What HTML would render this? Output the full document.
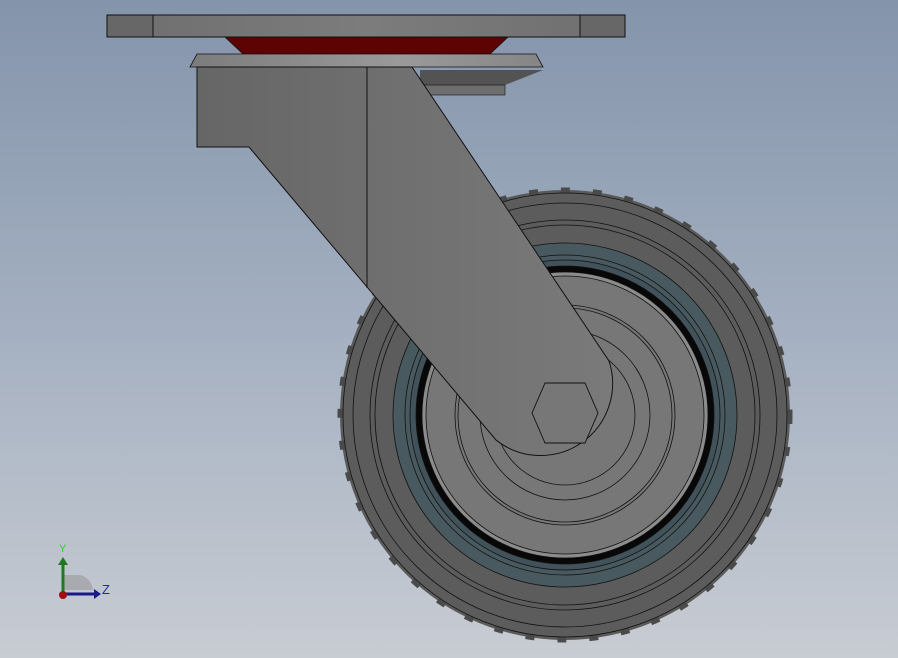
<!DOCTYPE html>
<html><head><meta charset="utf-8"><style>
html,body{margin:0;padding:0;width:898px;height:658px;overflow:hidden;}
body{background:linear-gradient(#8494ab 0%,#a4b0c1 50%,#c8ccd3 100%);}
svg{display:block}
</style></head><body>
<svg width="898" height="658" viewBox="0 0 898 658" xmlns="http://www.w3.org/2000/svg">
<defs>
<linearGradient id="pl" x1="0" x2="1"><stop offset="0" stop-color="#6e6e6e"/><stop offset="0.5" stop-color="#7c7c7c"/><stop offset="1" stop-color="#6f6f6f"/></linearGradient>
<linearGradient id="lp" x1="0" x2="1"><stop offset="0" stop-color="#7c7c7c"/><stop offset="0.6" stop-color="#9a9a9a"/><stop offset="1" stop-color="#858585"/></linearGradient>
<linearGradient id="br" x1="0" x2="1"><stop offset="0" stop-color="#666"/><stop offset="1" stop-color="#7a7a7a"/></linearGradient>
</defs>
<g stroke="#111" stroke-width="0.8">
<circle cx="565" cy="415" r="225" fill="#5a5a5a" stroke="none"/>
<circle cx="565" cy="415" r="225" fill="none" stroke="#4a4a4a" stroke-width="5" stroke-dasharray="9 23"/>
<circle cx="565" cy="415" r="222" fill="#5c5c5c"/>
<circle cx="565" cy="415" r="212" fill="none"/>
<circle cx="565" cy="415" r="195" fill="#5c5c5c"/>
<circle cx="565" cy="415" r="190" fill="none"/>
<circle cx="565" cy="415" r="172" fill="#48595f"/>
<circle cx="565" cy="415" r="160" fill="none"/>
<circle cx="565" cy="415" r="155" fill="#42525a"/>
<circle cx="565" cy="415" r="149" fill="#080808"/>
<circle cx="565" cy="415" r="143" fill="#8c8c8c"/>
<circle cx="565" cy="415" r="139" fill="#777"/>
<circle cx="565" cy="415" r="110" fill="none"/>
<circle cx="565" cy="415" r="107" fill="none"/>
<circle cx="565" cy="415" r="85" fill="none"/>
<circle cx="565" cy="415" r="70" fill="none"/>
</g>
<polygon points="225,37 508,37 490,54 243,54" fill="#5e0303" stroke="#111" stroke-width="0.8"/>
<rect x="107" y="15" width="518" height="22" fill="url(#pl)" stroke="#111" stroke-width="1"/>
<rect x="107" y="15" width="46" height="22" fill="#676767" stroke="#111" stroke-width="1"/>
<rect x="580" y="15" width="45" height="22" fill="#676767" stroke="#111" stroke-width="1"/>
<polygon points="420,70 543,70 505,85 420,85" fill="#535353"/>
<rect x="420" y="85" width="85" height="10" fill="#6e6e6e" stroke="#111" stroke-width="0.6"/>
<polygon points="197,54 536,54 543,67 190,67" fill="url(#lp)" stroke="#111" stroke-width="0.8"/>
<path d="M197,67 L412,67 L609,361 A72,72 0 0 1 496,440 L249,147 L197,147 Z" fill="url(#br)" stroke="#111" stroke-width="1"/>
<line x1="367" y1="67" x2="367" y2="288" stroke="#111" stroke-width="1"/>
<polygon points="545,383 585,383 598,413 585,443 545,443 532,413" fill="#777" stroke="#111" stroke-width="0.9"/>
<path d="M63,575 L80,575 A17,17 0 0 1 93,590 L63,590 Z" fill="#a8aab0"/>
<line x1="63" y1="594" x2="95" y2="594" stroke="#1a1a8a" stroke-width="3"/>
<polygon points="94,589 101,594 94,599" fill="#1a1a8a"/>
<line x1="63" y1="594" x2="63" y2="563" stroke="#1f7a1f" stroke-width="3"/>
<polygon points="58,565 63,557 68,565" fill="#1f7a1f"/>
<circle cx="63" cy="595" r="4" fill="#a01010"/>
<text x="59" y="552" font-family="Liberation Sans, sans-serif" font-size="11" fill="#3c3">Y</text>
<text x="102" y="594" font-family="Liberation Sans, sans-serif" font-size="13" fill="#22c">Z</text>
</svg>
</body></html>
